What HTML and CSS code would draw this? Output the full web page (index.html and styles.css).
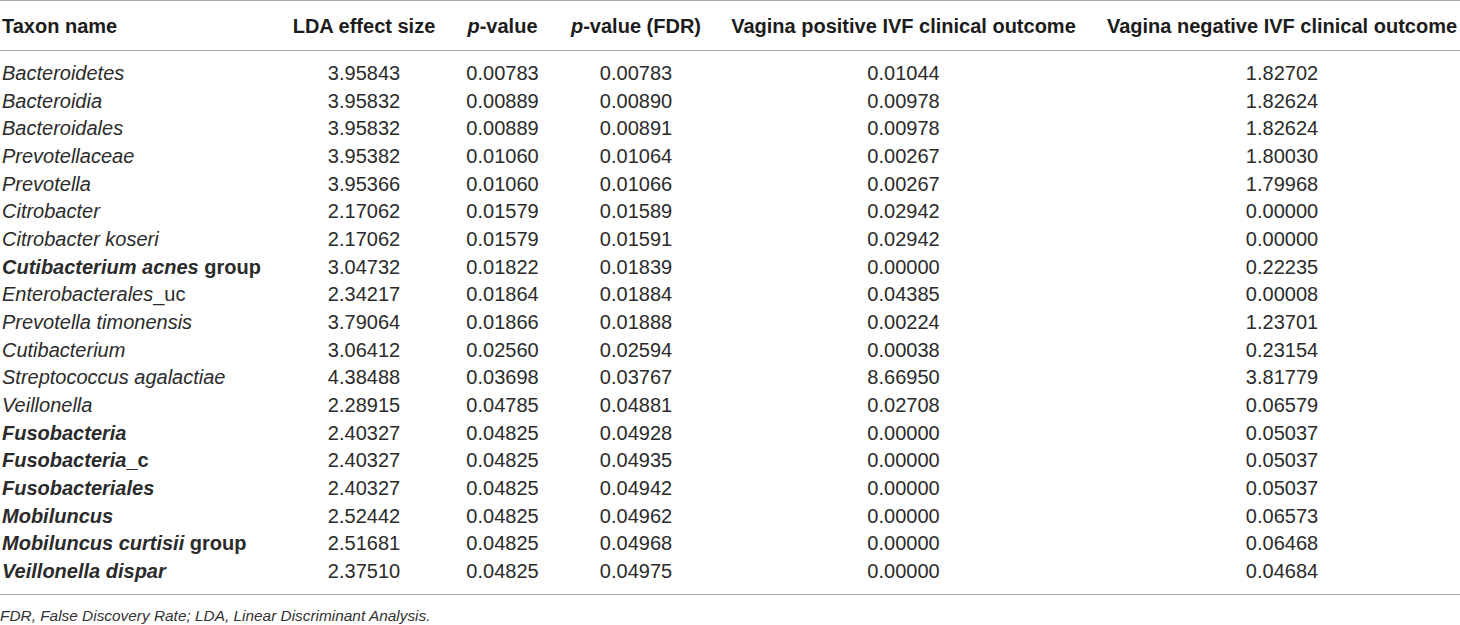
FILE: index.html
```html
<!DOCTYPE html>
<html lang="en">
<head>
<meta charset="utf-8">
<title>LEfSe table</title>
<link rel="stylesheet" href="styles.css">
</head>
<body>
<div class="wrap">
<table class="data">
<colgroup>
<col class="c1"><col class="c2"><col class="c3"><col class="c4"><col class="c5"><col class="c6">
</colgroup>
<thead>
<tr>
<th class="name">Taxon name</th>
<th>LDA effect size</th>
<th><i>p</i>-value</th>
<th><i>p</i>-value (FDR)</th>
<th>Vagina positive IVF clinical outcome</th>
<th class="last">Vagina negative IVF clinical outcome</th>
</tr>
</thead>
<tbody>
<tr class="first"><td class="name"><i>Bacteroidetes</i></td><td>3.95843</td><td>0.00783</td><td>0.00783</td><td>0.01044</td><td class="last">1.82702</td></tr>
<tr><td class="name"><i>Bacteroidia</i></td><td>3.95832</td><td>0.00889</td><td>0.00890</td><td>0.00978</td><td class="last">1.82624</td></tr>
<tr><td class="name"><i>Bacteroidales</i></td><td>3.95832</td><td>0.00889</td><td>0.00891</td><td>0.00978</td><td class="last">1.82624</td></tr>
<tr><td class="name"><i>Prevotellaceae</i></td><td>3.95382</td><td>0.01060</td><td>0.01064</td><td>0.00267</td><td class="last">1.80030</td></tr>
<tr><td class="name"><i>Prevotella</i></td><td>3.95366</td><td>0.01060</td><td>0.01066</td><td>0.00267</td><td class="last">1.79968</td></tr>
<tr><td class="name"><i>Citrobacter</i></td><td>2.17062</td><td>0.01579</td><td>0.01589</td><td>0.02942</td><td class="last">0.00000</td></tr>
<tr><td class="name"><i>Citrobacter koseri</i></td><td>2.17062</td><td>0.01579</td><td>0.01591</td><td>0.02942</td><td class="last">0.00000</td></tr>
<tr><td class="name"><b><i>Cutibacterium acnes</i> group</b></td><td>3.04732</td><td>0.01822</td><td>0.01839</td><td>0.00000</td><td class="last">0.22235</td></tr>
<tr><td class="name"><i>Enterobacterales</i>_uc</td><td>2.34217</td><td>0.01864</td><td>0.01884</td><td>0.04385</td><td class="last">0.00008</td></tr>
<tr><td class="name"><i>Prevotella timonensis</i></td><td>3.79064</td><td>0.01866</td><td>0.01888</td><td>0.00224</td><td class="last">1.23701</td></tr>
<tr><td class="name"><i>Cutibacterium</i></td><td>3.06412</td><td>0.02560</td><td>0.02594</td><td>0.00038</td><td class="last">0.23154</td></tr>
<tr><td class="name"><i>Streptococcus agalactiae</i></td><td>4.38488</td><td>0.03698</td><td>0.03767</td><td>8.66950</td><td class="last">3.81779</td></tr>
<tr><td class="name"><i>Veillonella</i></td><td>2.28915</td><td>0.04785</td><td>0.04881</td><td>0.02708</td><td class="last">0.06579</td></tr>
<tr><td class="name"><b><i>Fusobacteria</i></b></td><td>2.40327</td><td>0.04825</td><td>0.04928</td><td>0.00000</td><td class="last">0.05037</td></tr>
<tr><td class="name"><b><i>Fusobacteria</i>_c</b></td><td>2.40327</td><td>0.04825</td><td>0.04935</td><td>0.00000</td><td class="last">0.05037</td></tr>
<tr><td class="name"><b><i>Fusobacteriales</i></b></td><td>2.40327</td><td>0.04825</td><td>0.04942</td><td>0.00000</td><td class="last">0.05037</td></tr>
<tr><td class="name"><b><i>Mobiluncus</i></b></td><td>2.52442</td><td>0.04825</td><td>0.04962</td><td>0.00000</td><td class="last">0.06573</td></tr>
<tr><td class="name"><b><i>Mobiluncus curtisii</i> group</b></td><td>2.51681</td><td>0.04825</td><td>0.04968</td><td>0.00000</td><td class="last">0.06468</td></tr>
<tr class="final"><td class="name"><b><i>Veillonella dispar</i></b></td><td>2.37510</td><td>0.04825</td><td>0.04975</td><td>0.00000</td><td class="last">0.04684</td></tr>
</tbody>
</table>
<p class="note">FDR, False Discovery Rate; LDA, Linear Discriminant Analysis.</p>
</div>
</body>
</html>
```

FILE: styles.css
```css
html, body {
  margin: 0;
  padding: 0;
  background: #ffffff;
}

body {
  font-family: "Liberation Sans", Arial, Helvetica, sans-serif;
  color: #2b2b2b;
  width: 1460px;
  overflow: hidden;
}

.wrap {
  width: 1460px;
}

.data {
  width: 1460px;
  border-collapse: collapse;
  table-layout: fixed;
  font-size: 20px;
  border-top: 1px solid #a8a8a8;
  border-bottom: 1px solid #a8a8a8;
}

.c1 { width: 278px; }
.c2 { width: 172px; }
.c3 { width: 105px; }
.c4 { width: 162px; }
.c5 { width: 373px; }
.c6 { width: 370px; }

.data th {
  font-weight: bold;
  color: #1c1c1c;
  height: 49px;
  padding: 0;
  text-align: center;
  white-space: nowrap;
  border-bottom: 1px solid #a8a8a8;
  line-height: 24px;
}

.data td {
  padding: 0;
  height: 27.67px;
  line-height: 27.67px;
  text-align: center;
  white-space: nowrap;
}

.data .name {
  text-align: left;
  padding-left: 2px;
}

.data .last {
  padding-left: 14px;
}

.data tr.first td {
  padding-top: 9px;
}

.data tr.final td {
  padding-bottom: 8px;
}

.note {
  margin: 0;
  padding-top: 12px;
  font-size: 15.4px;
  font-style: italic;
  color: #333;
}
```
